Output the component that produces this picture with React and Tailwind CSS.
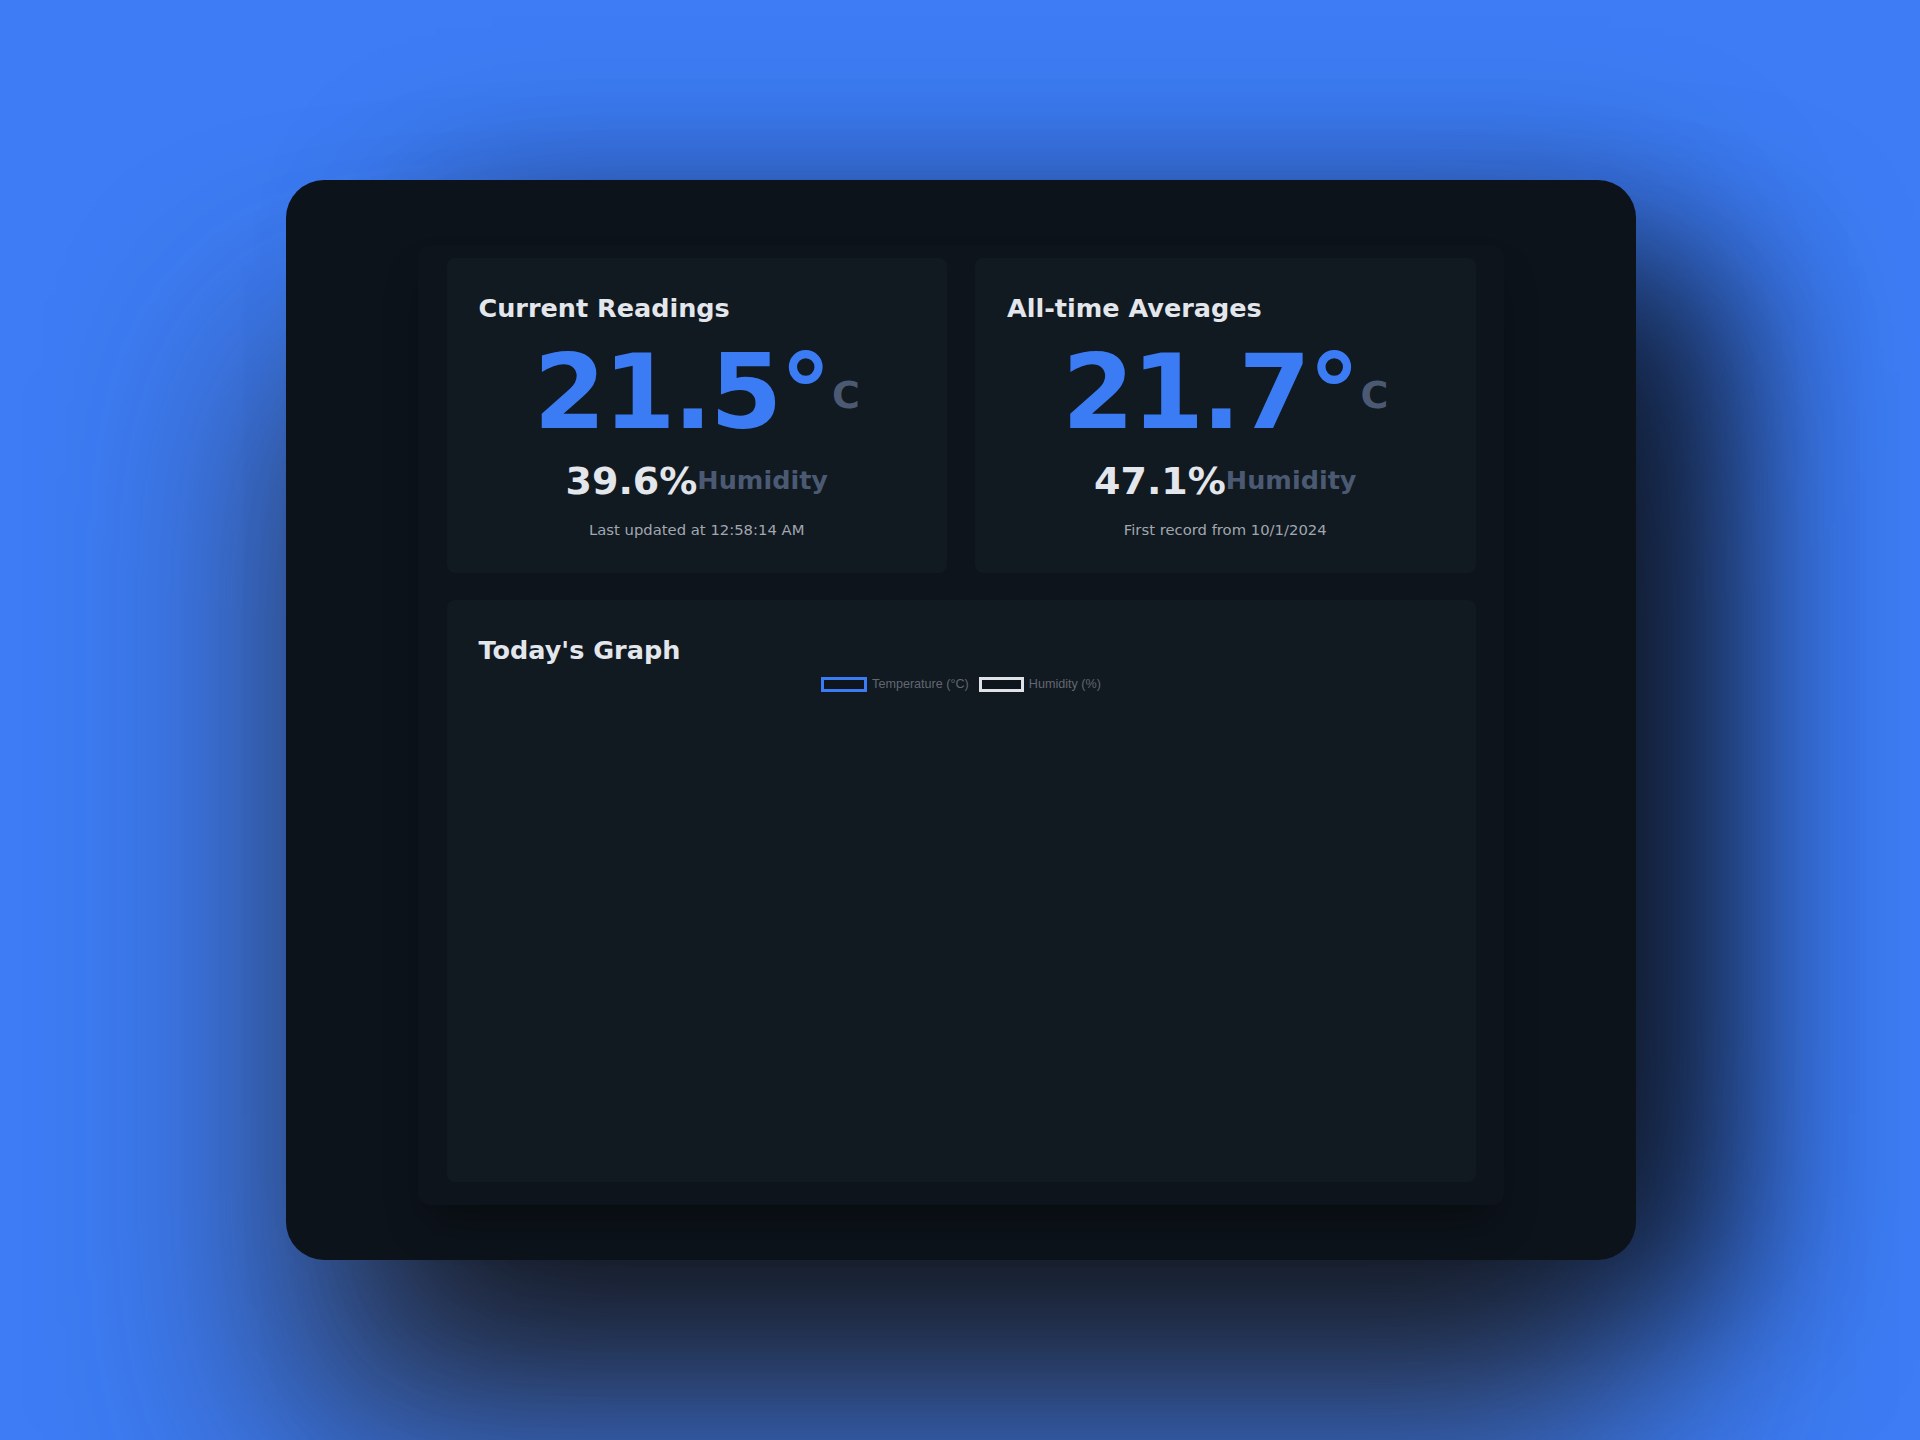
export default function App() {
  const Panel = ({ title, value, hum, foot }) => (
    <div className="flex h-[315px] flex-col rounded-lg bg-[#111921] p-8">
      <h2 className="mt-[2px] text-[25.5px] font-bold leading-[32px] text-[#e3e6eb]">{title}</h2>
      <div className="mt-[16px] flex items-center justify-center">
        <span className="text-[104px] font-bold leading-none tracking-tight text-[#3b7cf4]">{value}°</span>
        <span className="ml-[3px] mt-[5px] text-[38px] font-bold leading-none text-[#4b5a72]">C</span>
      </div>
      <div className="mt-[18px] flex items-center justify-center">
        <span className="text-[38px] font-bold leading-none text-[#e3e6eb]">{hum}%</span>
        <span className="text-[25.5px] font-bold leading-none text-[#4b5a72]">Humidity</span>
      </div>
      <p className="mt-5 text-center text-[14.8px] leading-5 text-[#a1a7b0]">{foot}</p>
    </div>
  );

  return (
    <div
      className="flex h-[1440px] w-[1920px] items-center justify-center overflow-hidden bg-[#3d7cf4]"
      style={{ fontFamily: '"DejaVu Sans", sans-serif' }}
    >
      <div className="ml-[2px] flex h-[1080px] w-[1350px] flex-col items-center rounded-[38px] bg-[#0c131a] pt-[65px] shadow-[130px_70px_160px_-20px_rgba(0,0,0,0.6),0_180px_220px_0_rgba(40,42,50,0.85),90px_-30px_160px_-60px_rgba(0,0,0,0.35)]">
        <div className="h-[960px] w-[1086px] rounded-xl bg-[#0d141b] pt-[13px] shadow-[0_25px_40px_-10px_rgba(0,0,0,0.35)]">
          <div className="mx-auto w-[1029px]">
            <div className="grid grid-cols-2 gap-[28px]">
              <Panel title="Current Readings" value="21.5" hum="39.6" foot="Last updated at 12:58:14 AM" />
              <Panel title="All-time Averages" value="21.7" hum="47.1" foot="First record from 10/1/2024" />
            </div>
            <div className="mt-[27px] flex h-[582px] flex-col rounded-lg bg-[#111921] p-8">
              <h2 className="mt-[2px] text-[25.5px] font-bold leading-[32px] text-[#e3e6eb]">Today's Graph</h2>
              <div
                className="mt-[11px] flex items-center justify-center gap-[10px] text-[12.6px] leading-[15px] text-[#62676f]"
                style={{ fontFamily: '"Liberation Sans", Arial, sans-serif' }}
              >
                <div className="flex items-center gap-[5px]">
                  <span className="h-[15px] w-[46px] border-[3px] border-[#3b7cf4] bg-[#0e151c]" />
                  <span>Temperature (°C)</span>
                </div>
                <div className="flex items-center gap-[5px]">
                  <span className="h-[15px] w-[45px] border-[3px] border-[#dfe2e6] bg-[#0e151c]" />
                  <span>Humidity (%)</span>
                </div>
              </div>
              <div className="flex-1" />
            </div>
          </div>
        </div>
      </div>
    </div>
  );
}
